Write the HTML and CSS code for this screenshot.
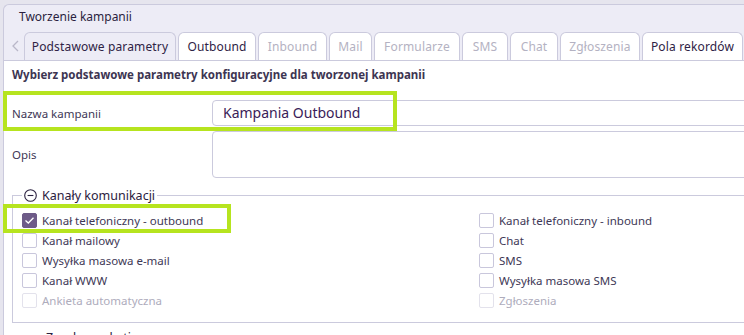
FILE: index.html
```html
<!DOCTYPE html>
<html lang="pl">
<head>
  <meta charset="UTF-8">
  <meta name="viewport" content="width=744, initial-scale=1.0">
  <title>Tworzenie kampanii</title>
  <link rel="stylesheet" href="styles.css">
</head>
<body>
  <div class="window">
    <div class="panel">
      <!-- Naglowek okna -->
      <div class="panel-title">Tworzenie kampanii</div>

      <!-- Zakladki -->
      <div class="tabs">
        <span class="tabs-arrow">
          <svg width="7" height="12" viewBox="0 0 7 12"><path d="M6 1 L1 6 L6 11" fill="none" stroke="#b9b7c8" stroke-width="1.3"/></svg>
        </span>
        <div class="tab tab-current tab-basic">Podstawowe parametry</div>
        <div class="tab tab-outbound">Outbound</div>
        <div class="tab tab-disabled tab-inbound">Inbound</div>
        <div class="tab tab-disabled tab-mail">Mail</div>
        <div class="tab tab-disabled tab-forms">Formularze</div>
        <div class="tab tab-disabled tab-sms">SMS</div>
        <div class="tab tab-disabled tab-chat">Chat</div>
        <div class="tab tab-disabled tab-tickets">Zgłoszenia</div>
        <div class="tab tab-fields">Pola rekordów</div>
        <div class="tab tab-more"></div>
      </div>

      <!-- Zawartosc zakladki -->
      <div class="content">
        <div class="content-heading">Wybierz podstawowe parametry konfiguracyjne dla tworzonej kampanii</div>

        <div class="form-row row-name">
          <div class="form-label">Nazwa kampanii</div>
          <div class="form-input">Kampania Outbound</div>
        </div>
        <div class="form-row row-desc">
          <div class="form-label">Opis</div>
          <div class="form-textarea"></div>
        </div>

        <fieldset class="channels">
          <legend class="channels-legend">
            <svg class="collapse-icon" width="13" height="13" viewBox="0 0 13 13"><circle cx="6.5" cy="6.5" r="5.8" fill="none" stroke="#2b2140" stroke-width="1.1"/><path d="M3.6 6.5 H9.4" stroke="#2b2140" stroke-width="1.1"/></svg>
            Kanały komunikacji
          </legend>
          <div class="channel-grid">
            <div class="check"><span class="box box-checked"><svg width="11" height="9" viewBox="0 0 11 9"><path d="M1.5 4.5 L4.3 7 L9.5 1.8" fill="none" stroke="#fff" stroke-width="1.3"/></svg></span>Kanał telefoniczny - outbound</div>
            <div class="check"><span class="box"></span>Kanał telefoniczny - inbound</div>
            <div class="check"><span class="box"></span>Kanał mailowy</div>
            <div class="check"><span class="box"></span>Chat</div>
            <div class="check"><span class="box"></span>Wysyłka masowa e-mail</div>
            <div class="check"><span class="box"></span>SMS</div>
            <div class="check"><span class="box"></span>Kanał WWW</div>
            <div class="check"><span class="box"></span>Wysyłka masowa SMS</div>
            <div class="check check-disabled"><span class="box"></span>Ankieta automatyczna</div>
            <div class="check check-disabled"><span class="box"></span>Zgłoszenia</div>
          </div>
        </fieldset>

        <div class="next-legend">Zgody marketingowe</div>

        <!-- Zielone ramki wyrozniajace -->
        <div class="highlight hl-name"></div>
        <div class="highlight hl-outbound"></div>
      </div>
    </div>
  </div>
</body>
</html>
```

FILE: styles.css
```css
/* Tlo i czcionka */
html, body {
  margin: 0;
  padding: 0;
  width: 744px;
  height: 335px;
  overflow: hidden;
  background: #e6e5ee;
  font-family: 'Noto Sans', 'Open Sans', Arial, sans-serif;
  color: #2b2140;
}
.window {
  padding: 4px 0 0 3px;
}
/* Panel okna */
.panel {
  width: 820px;
  min-height: 360px;
  background: #edecf6;
  border: 1px solid #cbcadd;
  border-right: none;
  border-bottom: none;
  border-radius: 6px 0 0 0;
  box-sizing: border-box;
  display: flex;
  flex-direction: column;
}
.panel-title {
  flex: none;
  font-size: 12px;
  line-height: 16px;
  padding: 4px 0 0 15px;
  height: 27px;
  box-sizing: border-box;
  color: #2b1f3f;
}
/* Zakladki */
.tabs {
  flex: none;
  display: flex;
  align-items: flex-end;
  height: 28px;
  gap: 2px;
  padding-left: 4px;
}
.tabs-arrow {
  width: 14px;
  height: 28px;
  display: flex;
  align-items: center;
  justify-content: center;
}
.tab {
  flex: none;
  height: 28px;
  box-sizing: border-box;
  border: 1px solid #cbcadd;
  border-bottom: none;
  border-radius: 6px 6px 0 0;
  background: #fff;
  font-size: 12px;
  line-height: 27px;
  text-align: center;
  color: #2f2345;
  white-space: nowrap;
  letter-spacing: 0.15px;
}
.tab-current {
  background: #edecf6;
}
.tab-disabled {
  color: #b4b2c2;
}
/* Szerokosci zakladek */
.tab-basic { width: 152px; }
.tab-outbound { width: 78px; }
.tab-inbound { width: 69px; }
.tab-mail { width: 43px; }
.tab-forms { width: 86px; }
.tab-sms { width: 46px; }
.tab-chat { width: 48px; }
.tab-tickets { width: 80px; }
.tab-fields { width: 101px; }
.tab-more { width: 60px; }
/* Zawartosc */
.content {
  flex: 1;
  background: #fff;
  border-top: 1px solid #cbcadd;
  position: relative;
  padding-left: 8px;
}
.content-heading {
  font-size: 11.5px;
  font-weight: 700;
  color: #3d3552;
  line-height: 16px;
  padding-top: 6px;
  height: 39px;
  box-sizing: border-box;
}
.form-row {
  display: flex;
  align-items: center;
}
.row-name {
  height: 26px;
}
.row-desc {
  margin-top: 5px;
  height: 47px;
}
.form-label {
  width: 200px;
  font-size: 11.5px;
  color: #3e3856;
}
.form-input,
.form-textarea {
  flex: 1;
  height: 100%;
  box-sizing: border-box;
  border: 1px solid #cbcadd;
  border-radius: 4px;
}
.form-input {
  font-size: 14px;
  line-height: 24px;
  padding-left: 10px;
  color: #3a1c58;
}
/* Kanaly komunikacji */
.channels {
  margin: 9px 0 0 0;
  padding: 6px 0 0 9px;
  height: 136px;
  box-sizing: border-box;
  border: 1px solid #cbcadd;
  border-right: none;
}
.channels-legend {
  padding: 0 2px;
  margin-left: 0;
  font-size: 12.5px;
  color: #2b2140;
  display: flex;
  align-items: center;
  gap: 5px;
}
.channel-grid {
  display: grid;
  grid-template-columns: 457px 1fr;
  grid-auto-rows: 20px;
}
.check {
  display: flex;
  align-items: center;
  gap: 5px;
  font-size: 11.5px;
  color: #3e3856;
}
.check-disabled {
  color: #aeacbc;
}
.box {
  width: 15px;
  height: 15px;
  box-sizing: border-box;
  border: 1px solid #c9c7dc;
  border-radius: 2px;
  background: #fff;
  display: flex;
  align-items: center;
  justify-content: center;
}
.check-disabled .box {
  border-color: #e3e2ec;
}
.box-checked {
  background: #6e5b88;
  border-color: #6e5b88;
}
.next-legend {
  padding: 6px 0 0 34px;
  font-size: 12.5px;
  color: #2b2140;
}
/* Ramki wyrozniajace */
.highlight {
  position: absolute;
  border: 4px solid #b6e41f;
  box-sizing: border-box;
  pointer-events: none;
}
.hl-name {
  left: -1px;
  top: 30px;
  width: 394px;
  height: 40px;
}
.hl-outbound {
  left: -1px;
  top: 143px;
  width: 228px;
  height: 29px;
}
```
